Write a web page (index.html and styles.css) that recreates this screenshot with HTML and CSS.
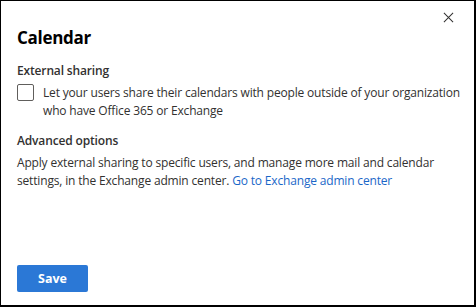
FILE: index.html
```html
<!DOCTYPE html>
<html lang="en">
<head>
  <meta charset="UTF-8">
  <meta name="viewport" content="width=device-width, initial-scale=1.0">
  <title>Calendar</title>
  <link rel="stylesheet" href="styles.css">
</head>
<body>
  <div class="panel">
    <button class="close-btn" aria-label="Close">
      <svg viewBox="0 0 12 12">
        <path d="M1 1L11 11M11 1L1 11"/>
      </svg>
    </button>

    <h1 class="title">Calendar</h1>

    <div class="section">
      <div class="section-label">External sharing</div>
      <label class="check-row">
        <span class="checkbox"></span>
        <span class="check-text">Let your users share their calendars with people outside of your organization who have Office 365 or Exchange</span>
      </label>
    </div>

    <div class="section">
      <div class="section-label">Advanced options</div>
      <p class="desc">Apply external sharing to specific users, and manage more mail and calendar settings, in the Exchange admin center. <a href="#">Go to Exchange admin center</a></p>
    </div>

    <div class="footer">
      <button class="save-btn">Save</button>
    </div>
  </div>
</body>
</html>
```

FILE: styles.css
```css
html, body {
  height: 100%;
}

body {
  margin: 0;
  padding: 0;
  font-family: "Open Sans", "Noto Sans", sans-serif;
  color: #323130;
  background-color: #fff;
}

.panel {
  position: relative;
  box-sizing: border-box;
  height: 100%;
  display: flex;
  flex-direction: column;
  padding: 24px 12px 13px 16px;
  border-top: 1px solid #000;
  border-left: 1px solid #000;
  border-right: 2px solid #000;
  border-bottom: 2px solid #000;
}

.close-btn {
  position: absolute;
  top: 11px;
  right: 20px;
  width: 11px;
  height: 11px;
  padding: 0;
  border: none;
  background: none;
  cursor: pointer;
}

.close-btn svg {
  display: block;
  width: 11px;
  height: 11px;
  stroke: #323130;
  stroke-width: 1.1;
  fill: none;
}

.title {
  margin: 0;
  font-size: 17px;
  font-weight: 700;
  letter-spacing: -0.3px;
  line-height: 26px;
  color: #000;
}

.section {
  margin-top: 11px;
}

.section + .section {
  margin-top: 12px;
}

.section-label {
  font-size: 12px;
  font-weight: 600;
  letter-spacing: -0.15px;
  line-height: 18px;
  color: #323130;
}

.check-row {
  display: flex;
  align-items: flex-start;
  gap: 9px;
  margin-top: 4px;
  cursor: pointer;
}

.checkbox {
  flex: none;
  width: 17px;
  height: 17px;
  border: 1px solid #605e5c;
  border-radius: 2px;
  box-sizing: border-box;
}

.check-text,
.desc {
  font-size: 12px;
  letter-spacing: -0.17px;
  line-height: 18px;
  color: #323130;
}

.desc {
  margin: 4px 0 0 0;
}

.desc a {
  color: #1a67c8;
  text-decoration: none;
}

.footer {
  margin-top: auto;
}

.save-btn {
  width: 71px;
  height: 27px;
  border: none;
  border-radius: 2px;
  background-color: #2b78d6;
  color: #fff;
  font-family: inherit;
  font-size: 12.5px;
  font-weight: 700;
  cursor: pointer;
}
```
